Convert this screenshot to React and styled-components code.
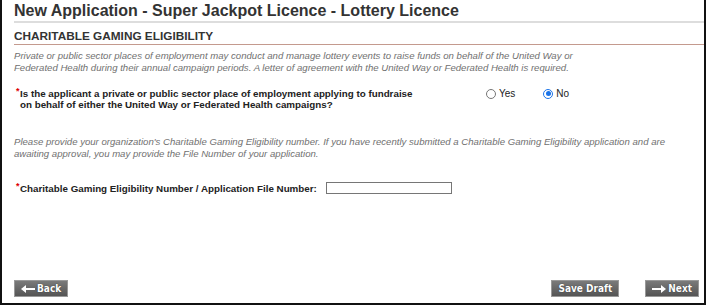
import React from "react";
import styled, { createGlobalStyle } from "styled-components";

const Global = createGlobalStyle`
  html, body { margin: 0; padding: 0; background: #fff; }
  body { font-family: "Liberation Sans", Arial, sans-serif; }
`;

const Frame = styled.div`
  width: 706px;
  height: 305px;
  box-sizing: border-box;
  border-left: 2px solid #111;
  border-right: 2px solid #111;
  border-bottom: 2px solid #111;
  background: #fff;
  display: flex;
  flex-direction: column;
  padding: 0 0 6px 12px;
`;

const Title = styled.h1`
  margin: 0;
  padding: 2px 0 2px 0;
  font-size: 16px;
  line-height: 17px;
  font-weight: bold;
  color: #333;
  border-bottom: 2px solid #ddd;
`;

const Section = styled.h2`
  margin: 6px 0 0 0;
  padding: 0 0 1px 0;
  font-size: 11.8px;
  line-height: 14px;
  font-weight: bold;
  color: #333;
  border-bottom: 1px solid #c49a8e;
`;

const Note = styled.p`
  margin: ${(p) => p.$mt || 0}px 0 0 0;
  font-size: 9.6px;
  line-height: 12px;
  font-style: italic;
  color: #707070;
`;

const QuestionRow = styled.div`
  display: flex;
  align-items: flex-start;
  margin-top: ${(p) => p.$mt || 0}px;
  padding-left: 2px;
`;

const Label = styled.div`
  box-sizing: border-box;
  font-size: 9.8px;
  line-height: 11px;
  font-weight: bold;
  color: #222;
  width: ${(p) => (p.$w ? p.$w + "px" : "auto")};
  padding-left: 4px;
  position: relative;
`;

const Star = styled.span`
  position: absolute;
  left: 0;
  top: -2px;
  color: #d00;
  font-size: 9px;
`;

const Radios = styled.div`
  display: flex;
  gap: 28px;
  margin-top: 0;
`;

const RadioLabel = styled.label`
  display: flex;
  align-items: center;
  gap: 3px;
  font-size: 10px;
  color: #222;
`;

const RadioCircle = styled.span`
  width: 10px;
  height: 10px;
  border-radius: 50%;
  box-sizing: border-box;
  border: 1px solid ${(p) => (p.$on ? "#1a73e8" : "#767676")};
  background: #fff;
  display: flex;
  align-items: center;
  justify-content: center;
  &::after {
    content: "";
    width: 5px;
    height: 5px;
    border-radius: 50%;
    background: ${(p) => (p.$on ? "#1a73e8" : "transparent")};
  }
`;

const TextInput = styled.input`
  width: 126px;
  height: 12px;
  box-sizing: border-box;
  border: 1px solid #767676;
  margin-left: 9px;
  padding: 0;
  margin-top: -1px;
`;

const Spacer = styled.div`
  flex: 1;
`;

const Footer = styled.div`
  display: flex;
  align-items: center;
  padding-right: 5px;
  gap: 26px;
`;

const Button = styled.button`
  height: 17px;
  box-sizing: border-box;
  padding: 0 ${(p) => p.$px || 8}px;
  border: 1px solid #999;
  background: linear-gradient(#7a7a7a, #555);
  color: #fff;
  font-family: "DejaVu Sans Condensed", "Liberation Sans Narrow", sans-serif;
  font-weight: bold;
  font-size: 10px;
  text-shadow: 0 0 1px #222;
  display: flex;
  align-items: center;
  gap: 2px;
  cursor: pointer;
`;

const Arrow = ({ dir }) => (
  <svg width="14" height="8" viewBox="0 0 14 8">
    {dir === "left" ? (
      <path d="M0 4 L5 0 L5 3 L14 3 L14 5 L5 5 L5 8 Z" fill="#fff" />
    ) : (
      <path d="M14 4 L9 0 L9 3 L0 3 L0 5 L9 5 L9 8 Z" fill="#fff" />
    )}
  </svg>
);

export default function App() {
  return (
    <>
      <Global />
      <Frame>
        <Title>New Application - Super Jackpot Licence - Lottery Licence</Title>
        <Section>CHARITABLE GAMING ELIGIBILITY</Section>
        <Note $mt={5}>
          Private or public sector places of employment may conduct and manage lottery events to raise funds on behalf of the United Way or
          <br />
          Federated Health during their annual campaign periods. A letter of agreement with the United Way or Federated Health is required.
        </Note>
        <QuestionRow $mt={14}>
          <Label $w={470}>
            <Star>*</Star>
            Is the applicant a private or public sector place of employment applying to fundraise
            <br />
            on behalf of either the United Way or Federated Health campaigns?
          </Label>
          <Radios>
            <RadioLabel>
              <RadioCircle />
              Yes
            </RadioLabel>
            <RadioLabel>
              <RadioCircle $on />
              No
            </RadioLabel>
          </Radios>
        </QuestionRow>
        <Note $mt={26}>
          Please provide your organization's Charitable Gaming Eligibility number. If you have recently submitted a Charitable Gaming Eligibility application and are
          <br />
          awaiting approval, you may provide the File Number of your application.
        </Note>
        <QuestionRow $mt={23}>
          <Label>
            <Star>*</Star>
            Charitable Gaming Eligibility Number / Application File Number:
          </Label>
          <TextInput type="text" />
        </QuestionRow>
        <Spacer />
        <Footer>
          <Button $px={6}>
            <Arrow dir="left" />
            Back
          </Button>
          <Spacer />
          <Button $px={6}>Save Draft</Button>
          <Button $px={6}>
            <Arrow dir="right" />
            Next
          </Button>
        </Footer>
      </Frame>
    </>
  );
}
